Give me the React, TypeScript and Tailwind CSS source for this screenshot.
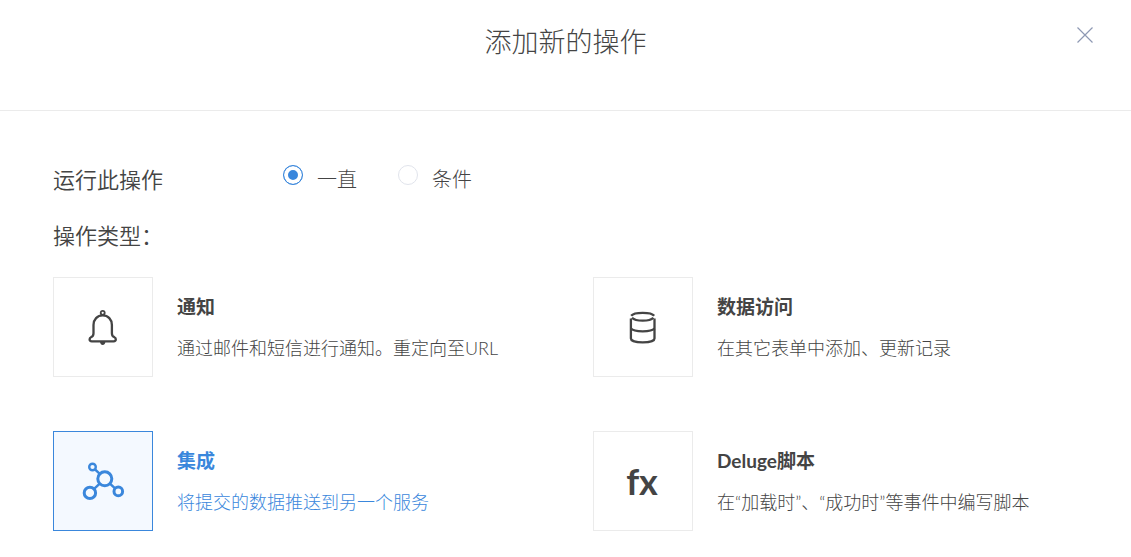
import { useState } from "react";
import clsx from "clsx";

const BellIcon = () => (
  <svg width="50" height="50" viewBox="0 0 50 50" fill="none" stroke="currentColor" strokeWidth="2.3">
    <circle cx="24.7" cy="10.8" r="2" strokeWidth="1.8" />
    <path d="M24.7 13.4c-5.4 0-9.2 4-9.2 9.6v8.2c0 2.2-.8 3.4-2.5 4-1 .4-1.4 1.2-1.4 2.1 0 1.4.8 2 2.2 2h21.8c1.4 0 2.2-.6 2.2-2 0-.9-.4-1.7-1.4-2.1-1.7-.6-2.5-1.8-2.5-4V23c0-5.6-3.8-9.6-9.2-9.6z" />
    <path d="M22 40h5.4c-.3 2.1-1.3 3-2.7 3s-2.4-.9-2.7-3z" fill="currentColor" stroke="none" />
  </svg>
);

const DatabaseIcon = () => (
  <svg width="50" height="50" viewBox="0 0 50 50" fill="none" stroke="currentColor" strokeWidth="2.3">
    <path d="M13.2 13.8c1.4-1.8 6-2.9 11.5-2.9s10.1 1.1 11.5 2.9" />
    <path d="M14 15.8c1.8 1.9 5.8 2.9 10.7 2.9s8.9-1 10.7-2.9" />
    <path d="M12.9 16.5v20c0 2.2 5 3.9 11.8 3.9s11.8-1.7 11.8-3.9v-20" />
    <path d="M12.9 26.6c1.4 1.7 6.2 2.7 11.8 2.7s10.4-1 11.8-2.7" />
  </svg>
);

const NetworkIcon = () => (
  <svg width="50" height="50" viewBox="0 0 50 50" fill="none" stroke="currentColor" strokeWidth="3">
    <circle cx="14.5" cy="11" r="3.3" strokeWidth="2.4" />
    <circle cx="26.8" cy="22.8" r="7" />
    <circle cx="11.9" cy="36.9" r="5.7" />
    <circle cx="40.3" cy="35.4" r="4.3" />
    <path d="M17 13.3l4.5 4.4M21.7 27.7l-5.6 5.2M31.9 27.6l5.2 4.8" strokeWidth="2.5" />
  </svg>
);

const actions = [
  {
    id: "notify",
    title: "通知",
    text: "通过邮件和短信进行通知。重定向至URL",
    icon: <BellIcon />,
  },
  {
    id: "data",
    title: "数据访问",
    text: "在其它表单中添加、更新记录",
    icon: <DatabaseIcon />,
  },
  {
    id: "integration",
    title: "集成",
    text: "将提交的数据推送到另一个服务",
    icon: <NetworkIcon />,
  },
  {
    id: "deluge",
    title: "Deluge脚本",
    text: "在“加载时”、“成功时”等事件中编写脚本",
    icon: <span className="pr-0.5 text-[36px] leading-none font-bold">fx</span>,
  },
];

const runModes = [
  { value: "always", label: "一直" },
  { value: "condition", label: "条件" },
];

export default function App() {
  const [mode, setMode] = useState("always");
  const [selected, setSelected] = useState("integration");

  return (
    <div
      lang="zh-CN"
      className="bg-white pb-6 font-['Lato','Noto_Sans_CJK_SC',sans-serif] text-[#444]"
    >
      <header className="grid grid-cols-[1fr_auto_1fr] items-start border-b border-[#ebebeb] pt-6 pb-[50px]">
        <h1 className="col-start-2 text-[27px] leading-9 font-light">添加新的操作</h1>
        <button
          type="button"
          aria-label="关闭"
          className="mt-[3px] mr-[37px] justify-self-end text-[#8e99b3]"
        >
          <svg width="18" height="16" viewBox="0 0 18 16" fill="none" stroke="currentColor">
            <path d="M1.5.5l15 15M16.5.5l-15 15" strokeWidth="1.2" />
          </svg>
        </button>
      </header>

      <main className="px-[53px] pt-[52px]">
        <div role="radiogroup" aria-labelledby="run-label" className="flex items-start">
          <span id="run-label" className="w-[230px] text-[22px] leading-[34px] font-[350]">
            运行此操作
          </span>
          <div className="flex gap-[41px]">
            {runModes.map((item) => (
              <label key={item.value} className="flex items-start gap-3.5">
                <input
                  type="radio"
                  name="run-mode"
                  value={item.value}
                  checked={mode === item.value}
                  onChange={() => setMode(item.value)}
                  className="mt-0.5 size-5 appearance-none rounded-full border border-[#e1e4ec] checked:border-[#3a87dc] checked:bg-[#3a87dc] checked:shadow-[inset_0_0_0_4px_#fff]"
                />
                <span className="text-[20px] leading-8 font-light">{item.label}</span>
              </label>
            ))}
          </div>
        </div>

        <h2 className="mt-[22px] text-[22px] leading-[34px] font-[350]">操作类型：</h2>

        <div className="mt-6 grid grid-cols-2 gap-x-[55px] gap-y-[54px]">
          {actions.map((action) => {
            const active = selected === action.id;
            return (
              <button
                key={action.id}
                type="button"
                aria-pressed={active}
                onClick={() => setSelected(action.id)}
                className={clsx("flex gap-6 text-left", active && "text-[#3a87dc]")}
              >
                <span
                  className={clsx(
                    "flex size-[100px] shrink-0 items-center justify-center border",
                    active ? "border-[#3a87dc] bg-[#f4f9ff]" : "border-[#ebebeb]"
                  )}
                >
                  {action.icon}
                </span>
                <span className="flex flex-col gap-[13px] pt-4">
                  <span className="text-[19px] leading-7 font-bold">{action.title}</span>
                  <span className="text-[18px] leading-7 font-light">{action.text}</span>
                </span>
              </button>
            );
          })}
        </div>
      </main>
    </div>
  );
}
